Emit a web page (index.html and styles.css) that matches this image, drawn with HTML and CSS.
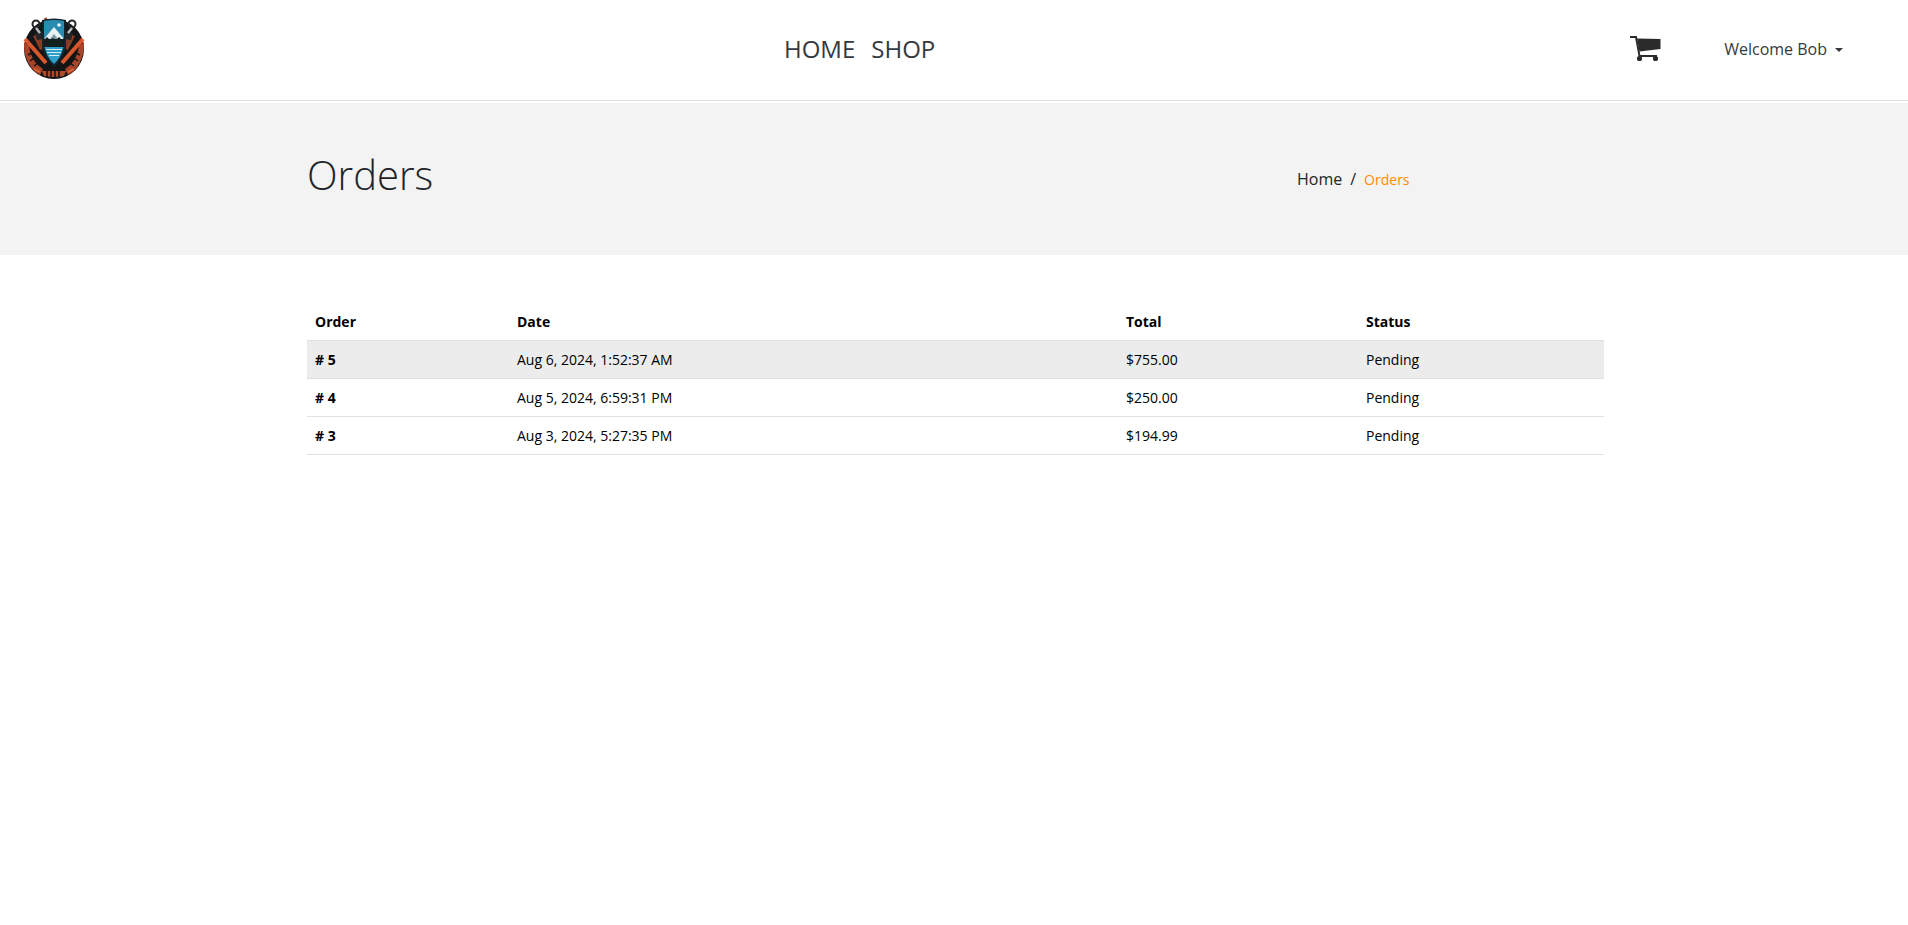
FILE: index.html
```html
<!DOCTYPE html>
<html lang="en">

<head>
    <meta charset="UTF-8">
    <title>Orders</title>
    <link rel="stylesheet" href="styles.css">
</head>

<body>
    <nav class="navbar">
        <a class="logo" href="#">
            <svg width="66" height="66" viewBox="0 0 66 66" xmlns="http://www.w3.org/2000/svg">
                <g class="logo-art">
                    <!-- ring -->
                    <circle cx="34" cy="33" r="30" fill="#131517" />
                    <path d="M4 26 L9 30 Q11 46 23 53 L20 59 Q5 50 4 30 Z" fill="#a8442a" />
                    <path d="M64 26 L59 30 Q57 46 45 53 L48 59 Q63 50 64 30 Z" fill="#a8442a" />
                    <path d="M22 55 L46 55 L44 60 Q34 62 24 60 Z" fill="#b24a2a" />
                    <path d="M8 39 L12 37 M10 45 L14 42 M14 50 L18 47 M27 62 V54 M31 62 V54 M35 62 V54 M39 62 V54 M60 39 L56 37 M58 45 L54 42 M54 50 L50 47"
                        stroke="#131517" stroke-width="1.500" />
                    <path d="M14 53 L20 56 M54 53 L48 56" stroke="#d9602f" stroke-width="2" />
                    <!-- tools -->
                    <path d="M5 23 L26 47" stroke="#d8572c" stroke-width="4" />
                    <path d="M63 23 L42 47" stroke="#d8572c" stroke-width="4" />
                    <path d="M13 26 L16 23 L22 30 L19 33 Z M20 34 L23 31 L27 36 L24 39 Z" fill="#131517" />
                    <path d="M55 26 L52 23 L46 30 L49 33 Z M48 34 L45 31 L41 36 L44 39 Z" fill="#131517" />
                    <path d="M13 20 L22 17 L26 32 L20 34 Z" fill="#8b3a24" />
                    <path d="M55 20 L46 17 L42 32 L48 34 Z" fill="#8b3a24" />
                    <path d="M15 17 L23 15 L24 23 L17 24 Z" fill="#23272a" />
                    <path d="M53 17 L45 15 L44 23 L51 24 Z" fill="#23272a" />
                    <circle cx="16" cy="8" r="3.500" fill="none" stroke="#23272a" stroke-width="2" />
                    <circle cx="52" cy="8" r="3.500" fill="none" stroke="#23272a" stroke-width="2" />
                    <path d="M16 12 L20 17" stroke="#b9bfc2" stroke-width="2.500" />
                    <path d="M52 12 L48 17" stroke="#b9bfc2" stroke-width="2.500" />
                    <path d="M25 2 L31 12" stroke="#a8452b" stroke-width="3" />
                    <!-- shield -->
                    <path d="M22 4 Q34 1 46 4 L46 32 Q43 44 34 51 Q25 44 22 32 Z" fill="#15242a" />
                    <path d="M24 5 Q34 3 44 5 L44 22 L24 22 Z" fill="#2a8cb0" />
                    <circle cx="39" cy="9" r="1.800" fill="#eef6f8" />
                    <path d="M24 23 L34 11 L44 23 Z" fill="#e8f1f4" />
                    <path d="M30 23 L34 18 L38 23 Z" fill="#7f9aa8" />
                    <path d="M24 31 L24 24 L27 21 L30 24 L33 22 L36 24 L39 21 L42 24 L44 22 L44 31 Z" fill="#10201c" />
                    <path d="M24.500 31 L43.500 31 Q41 42 34 48 Q27 42 24.500 31 Z" fill="#2e9fc8" />
                    <path d="M26 33.500 H42 M27 36.500 H41 M29 39.500 H39" stroke="#d7eef6" stroke-width="1" />
                </g>
            </svg>
        </a>
        <ul class="nav-links">
            <li><a href="#">HOME</a></li>
            <li><a href="#">SHOP</a></li>
        </ul>
        <div class="nav-right">
            <a class="cart" href="#">
                <svg width="31" height="26" viewBox="0 0 31 26" xmlns="http://www.w3.org/2000/svg">
                    <path fill="#2b2b2b" d="M7 2.500 L30.500 3 V13 L9.500 15.500 Z" />
                    <path fill="none" stroke="#2b2b2b" stroke-width="2" d="M0 1 H6 L9.500 20 H27" />
                    <circle cx="9.500" cy="22.500" r="2.600" fill="#2b2b2b" />
                    <circle cx="25.500" cy="22.500" r="2.600" fill="#2b2b2b" />
                </svg>
            </a>
            <a class="user-menu" href="#">Welcome Bob<span class="caret"></span></a>
        </div>
    </nav>

    <header class="page-title">
        <div class="title-row">
            <h1>Orders</h1>
            <div class="breadcrumb">
                <a href="#">Home</a>
                <span>/</span>
                <span class="current">Orders</span>
            </div>
        </div>
    </header>

    <main class="content">
        <table class="orders">
            <thead>
                <tr>
                    <th class="col-order">Order</th>
                    <th class="col-date">Date</th>
                    <th class="col-total">Total</th>
                    <th>Status</th>
                </tr>
            </thead>
            <tbody>
                <tr class="hover">
                    <td class="num">#&nbsp;5</td>
                    <td>Aug 6, 2024, 1:52:37 AM</td>
                    <td>$755.00</td>
                    <td>Pending</td>
                </tr>
                <tr>
                    <td class="num">#&nbsp;4</td>
                    <td>Aug 5, 2024, 6:59:31 PM</td>
                    <td>$250.00</td>
                    <td>Pending</td>
                </tr>
                <tr>
                    <td class="num">#&nbsp;3</td>
                    <td>Aug 3, 2024, 5:27:35 PM</td>
                    <td>$194.99</td>
                    <td>Pending</td>
                </tr>
            </tbody>
        </table>
    </main>
</body>

</html>
```

FILE: styles.css
```css
* {
    box-sizing: border-box;
}

body {
    margin: 0;
    background-color: #fff;
    color: #212529;
    font-family: "Open Sans", sans-serif;
    font-size: 16px;
}

a {
    color: inherit;
    text-decoration: none;
}

.navbar {
    display: flex;
    align-items: center;
    height: 101px;
    padding: 0 65px 2px 20px;
    border-bottom: 1px solid #dee2e6;
}

.logo {
    display: flex;
}

.logo-art {
    filter: blur(0.3px);
}

.nav-links {
    display: flex;
    gap: 16px;
    margin: 0 0 2px 698px;
    padding: 0;
    list-style: none;
    color: #343a40;
    font-size: 24px;
}

.nav-right {
    display: flex;
    align-items: center;
    margin-left: auto;
    color: #343a40;
}

.cart {
    display: flex;
    margin-right: 63px;
}

.caret {
    display: inline-block;
    margin-left: 8px;
    vertical-align: 3px;
    border-top: 4.8px solid;
    border-right: 4.8px solid transparent;
    border-left: 4.8px solid transparent;
}

.page-title {
    height: 152px;
    margin-top: 2px;
    background-color: #f3f3f3;
}

.title-row {
    display: flex;
    align-items: center;
    height: 100%;
    margin-left: 307px;
    padding-bottom: 10px;
}

.title-row h1 {
    width: 990px;
    margin: 0;
    font-size: 40px;
    font-weight: 300;
}

.breadcrumb {
    display: flex;
    align-items: center;
    gap: 8px;
    margin-top: 10px;
}

.breadcrumb .current {
    color: #ff8c00;
    font-size: 14px;
}

.content {
    padding: 47px 304px 0 307px;
}

.orders {
    width: 100%;
    border-collapse: collapse;
    color: #000;
    font-size: 14px;
    table-layout: fixed;
}

.orders th,
.orders td {
    height: 38px;
    padding: 0 8px;
    text-align: left;
    border-bottom: 1px solid #dee2e6;
}

.orders th {
    padding-top: 2px;
}

.orders .col-order {
    width: 202px;
}

.orders .col-date {
    width: 609px;
}

.orders .col-total {
    width: 240px;
}

.orders .num {
    font-weight: 700;
}

.orders .hover {
    background-color: #ececec;
}
```
